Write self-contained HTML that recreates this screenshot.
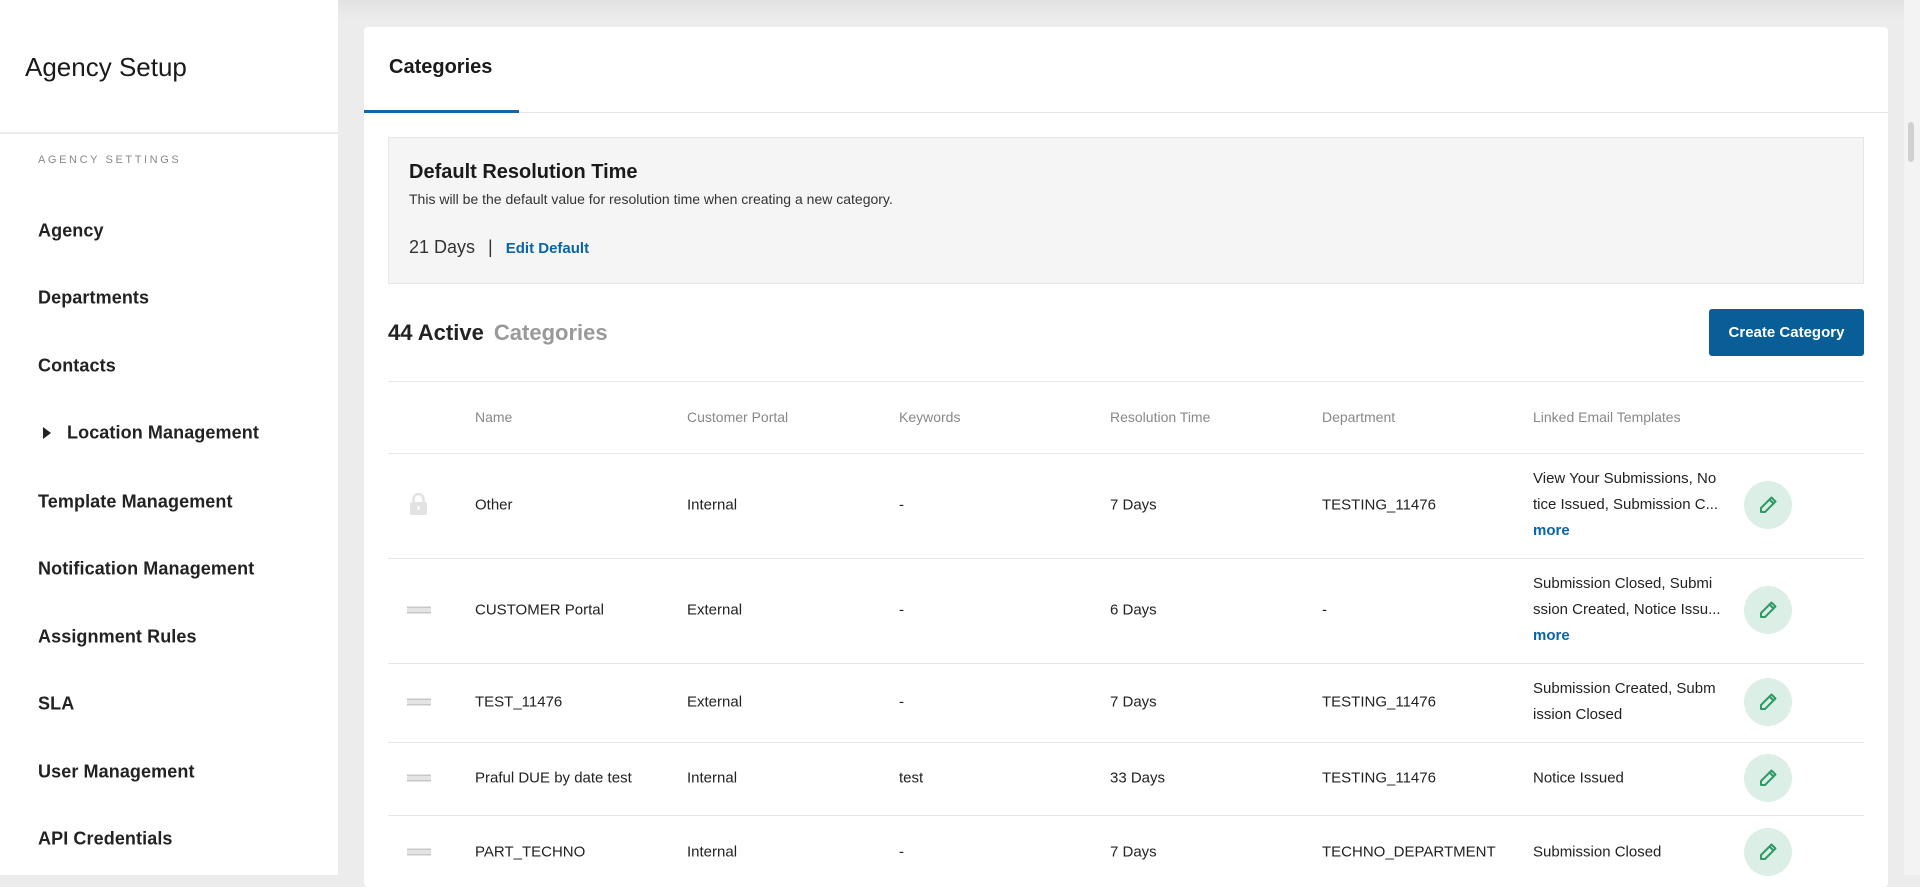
<!DOCTYPE html>
<html><head><meta charset="utf-8"><style>
*{margin:0;padding:0;box-sizing:border-box}
body{width:1920px;height:875px;overflow:hidden;background:#ececec;font-family:"Liberation Sans",Arial,sans-serif;color:#222;position:relative}
.a{position:absolute;white-space:nowrap}
#side{position:absolute;left:0;top:0;width:338px;height:875px;background:#fff}
.nav{position:absolute;left:38px;font-size:18px;font-weight:bold;color:#222;letter-spacing:0.1px;transform:translateY(-50%)}
#card{position:absolute;left:364px;top:27px;width:1524px;height:860px;background:#fff;border-radius:4px}
.th{position:absolute;top:417px;transform:translateY(-50%);font-size:14px;color:#888}
.td{position:absolute;transform:translateY(-50%);font-size:15px;color:#222;white-space:nowrap}
.hl{position:absolute;left:388px;width:1476px;height:1px;background:#e6e6e6}
.ed{position:absolute;left:1744px;width:48px;height:48px;border-radius:50%;background:#dcefe6;transform:translateY(-50%)}
.ed svg{position:absolute;left:14px;top:14px}
.drag{position:absolute;left:407px;width:24px;height:7px;border-top:2px solid #c8c8c8;border-bottom:2px solid #c8c8c8;transform:translateY(-50%)}
.drag:after{content:"";position:absolute;left:0;right:0;top:0.5px;height:1px;background:#c8c8c8}
.lt{position:absolute;left:1533px;font-size:15px;line-height:26px;color:#222;width:205px}
.more{color:#0a64a8;font-weight:bold}
</style></head><body>
<div style="position:absolute;left:338px;top:0;width:1582px;height:20px;background:linear-gradient(#e2e2e2,#ececec)"></div>
<div style="position:absolute;left:1904px;top:0;width:16px;height:875px;background:#f3f3f3"></div>
<div style="position:absolute;left:1908px;top:122px;width:6px;height:40px;background:#d0d0d0;border-radius:3px"></div>
<div id="side">
  <div class="a" style="left:25px;top:52px;font-size:26px;color:#1a1a1a">Agency Setup</div>
  <div style="position:absolute;left:0;top:132px;width:338px;height:2px;background:#ececec"></div>
  <div class="a" style="left:38px;top:154px;font-size:11px;letter-spacing:2.6px;color:#888">AGENCY SETTINGS</div>
  <div class="nav a" style="top:231px">Agency</div>
  <div class="nav a" style="top:298px">Departments</div>
  <div class="nav a" style="top:366px">Contacts</div>
  <div class="a" style="left:43px;top:427px;width:0;height:0;border-left:8px solid #222;border-top:6px solid transparent;border-bottom:6px solid transparent"></div>
  <div class="nav a" style="top:433px;left:67px">Location Management</div>
  <div class="nav a" style="top:502px">Template Management</div>
  <div class="nav a" style="top:569px">Notification Management</div>
  <div class="nav a" style="top:637px">Assignment Rules</div>
  <div class="nav a" style="top:704px">SLA</div>
  <div class="nav a" style="top:772px">User Management</div>
  <div class="nav a" style="top:839px">API Credentials</div>
</div>
<div id="card"></div>
<div class="a" style="left:389px;top:56px;font-size:20px;font-weight:bold;color:#1a1a1a">Categories</div>
<div style="position:absolute;left:364px;top:112px;width:1524px;height:1px;background:#e6e6e6"></div>
<div style="position:absolute;left:364px;top:110px;width:155px;height:3px;background:#1565a8"></div>
<div style="position:absolute;left:388px;top:137px;width:1476px;height:147px;background:#f5f5f5;border:1px solid #e6e6e6"></div>
<div class="a" style="left:409px;top:161px;font-size:20px;font-weight:bold;color:#1a1a1a">Default Resolution Time</div>
<div class="a" style="left:409px;top:191px;font-size:14px;color:#333">This will be the default value for resolution time when creating a new category.</div>
<div class="a" style="left:409px;top:237px;font-size:18px;color:#333">21 Days <span style="margin:0 8px;color:#333">|</span> <span style="font-size:15px;font-weight:bold;color:#0a64a8">Edit Default</span></div>
<div class="a" style="left:388px;top:320px;font-size:22px;font-weight:bold;color:#222">44 Active <span style="color:#999;margin-left:4px">Categories</span></div>
<div style="position:absolute;left:1709px;top:309px;width:155px;height:47px;background:#0a5e97;border-radius:3px;color:#fff;font-size:15px;font-weight:bold;text-align:center;line-height:47px">Create Category</div>
<div class="hl" style="top:381px"></div>
<div class="th" style="left:475px">Name</div>
<div class="th" style="left:687px">Customer Portal</div>
<div class="th" style="left:899px">Keywords</div>
<div class="th" style="left:1110px">Resolution Time</div>
<div class="th" style="left:1322px">Department</div>
<div class="th" style="left:1533px">Linked Email Templates</div>
<div class="hl" style="top:453px"></div>
<svg style="position:absolute;left:410px;top:493px" width="17" height="22" viewBox="0 0 17 22"><path d="M3.5 9V6a5 5 0 0 1 10 0v3" fill="none" stroke="#e2e2e2" stroke-width="2.5"/><rect x="0" y="9" width="17" height="13" rx="2" fill="#e2e2e2"/><rect x="7.5" y="13" width="2" height="4" fill="#fff"/></svg>
<div class="td" style="left:475px;top:505px">Other</div>
<div class="td" style="left:687px;top:505px">Internal</div>
<div class="td" style="left:899px;top:505px">-</div>
<div class="td" style="left:1110px;top:505px">7 Days</div>
<div class="td" style="left:1322px;top:505px">TESTING_11476</div>
<div class="lt" style="top:466px">View Your Submissions, No<br>tice Issued, Submission C...<br><span class="more">more</span></div>
<div class="ed" style="top:505px"><svg width="20" height="20" viewBox="0 0 20 20"><path d="M13.5 2.5l4 4L7 17H3v-4z M11.5 4.5l4 4" fill="none" stroke="#2e9a66" stroke-width="2" stroke-linejoin="round"/></svg></div>
<div class="hl" style="top:558px"></div>
<div class="drag" style="top:610px"></div>
<div class="td" style="left:475px;top:610px">CUSTOMER Portal</div>
<div class="td" style="left:687px;top:610px">External</div>
<div class="td" style="left:899px;top:610px">-</div>
<div class="td" style="left:1110px;top:610px">6 Days</div>
<div class="td" style="left:1322px;top:610px">-</div>
<div class="lt" style="top:571px">Submission Closed, Submi<br>ssion Created, Notice Issu...<br><span class="more">more</span></div>
<div class="ed" style="top:610px"><svg width="20" height="20" viewBox="0 0 20 20"><path d="M13.5 2.5l4 4L7 17H3v-4z M11.5 4.5l4 4" fill="none" stroke="#2e9a66" stroke-width="2" stroke-linejoin="round"/></svg></div>
<div class="hl" style="top:663px"></div>
<div class="drag" style="top:702px"></div>
<div class="td" style="left:475px;top:702px">TEST_11476</div>
<div class="td" style="left:687px;top:702px">External</div>
<div class="td" style="left:899px;top:702px">-</div>
<div class="td" style="left:1110px;top:702px">7 Days</div>
<div class="td" style="left:1322px;top:702px">TESTING_11476</div>
<div class="lt" style="top:676px">Submission Created, Subm<br>ission Closed</div>
<div class="ed" style="top:702px"><svg width="20" height="20" viewBox="0 0 20 20"><path d="M13.5 2.5l4 4L7 17H3v-4z M11.5 4.5l4 4" fill="none" stroke="#2e9a66" stroke-width="2" stroke-linejoin="round"/></svg></div>
<div class="hl" style="top:742px"></div>
<div class="drag" style="top:778px"></div>
<div class="td" style="left:475px;top:778px">Praful DUE by date test</div>
<div class="td" style="left:687px;top:778px">Internal</div>
<div class="td" style="left:899px;top:778px">test</div>
<div class="td" style="left:1110px;top:778px">33 Days</div>
<div class="td" style="left:1322px;top:778px">TESTING_11476</div>
<div class="td" style="left:1533px;top:778px">Notice Issued</div>
<div class="ed" style="top:778px"><svg width="20" height="20" viewBox="0 0 20 20"><path d="M13.5 2.5l4 4L7 17H3v-4z M11.5 4.5l4 4" fill="none" stroke="#2e9a66" stroke-width="2" stroke-linejoin="round"/></svg></div>
<div class="hl" style="top:815px"></div>
<div class="drag" style="top:852px"></div>
<div class="td" style="left:475px;top:852px">PART_TECHNO</div>
<div class="td" style="left:687px;top:852px">Internal</div>
<div class="td" style="left:899px;top:852px">-</div>
<div class="td" style="left:1110px;top:852px">7 Days</div>
<div class="td" style="left:1322px;top:852px">TECHNO_DEPARTMENT</div>
<div class="td" style="left:1533px;top:852px">Submission Closed</div>
<div class="ed" style="top:852px"><svg width="20" height="20" viewBox="0 0 20 20"><path d="M13.5 2.5l4 4L7 17H3v-4z M11.5 4.5l4 4" fill="none" stroke="#2e9a66" stroke-width="2" stroke-linejoin="round"/></svg></div>
</body></html>
